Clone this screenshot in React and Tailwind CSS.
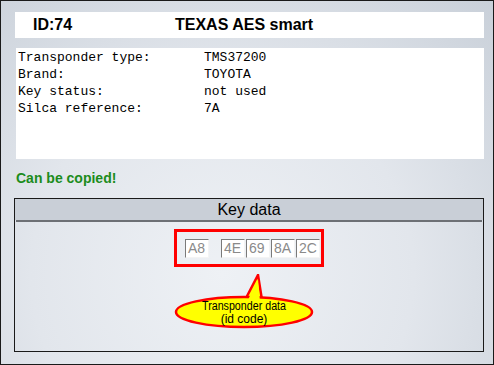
import React from 'react';

const rows = [
  ['Transponder type:', 'TMS37200'],
  ['Brand:', 'TOYOTA'],
  ['Key status:', 'not used'],
  ['Silca reference:', '7A'],
];

const KeyCell = ({ value }) => (
  <div className="w-[24px] h-[19px] bg-white border border-t-[#7a7a7a] border-l-[#7a7a7a] border-b-[#f4f4f4] border-r-[#f4f4f4] text-[14px] leading-[17px] text-[#8a8a8a] pl-[2px]">
    {value}
  </div>
);

const Balloon = () => (
  <svg className="absolute left-[158px] top-[75px]" width="142" height="56" viewBox="0 0 142 56">
    <polygon points="72,26 85,1 89,26" fill="#ffff00" stroke="#ff0000" strokeWidth="2.5" strokeLinejoin="miter" />
    <ellipse cx="71" cy="38" rx="68" ry="15" fill="#ffff00" stroke="#ff0000" strokeWidth="2.5" />
    <polygon points="74,28 85,5 87,28" fill="#ffff00" />
    <text x="71" y="36" textAnchor="middle" textLength="84" lengthAdjust="spacingAndGlyphs" fontSize="12" fontFamily="'Liberation Sans', sans-serif" fill="#000">
      Transponder data
    </text>
    <text x="71" y="49" textAnchor="middle" fontSize="12" fontFamily="'Liberation Sans', sans-serif" fill="#000">
      (id code)
    </text>
  </svg>
);

export default function App() {
  return (
    <div className="w-[494px] h-[365px] border border-[#1a1a1a] bg-[radial-gradient(ellipse_at_45%_75%,#eef1f5_0%,#e2e6ec_50%,#c9d0d9_100%)] pl-[13px] pr-[9px] pt-[11px] font-['Liberation_Sans',Arial,sans-serif]">
      {/* Header */}
      <div className="ml-px h-[26px] bg-white flex items-center">
        <span className="ml-[18px] w-[142px] text-[16px] font-bold text-black">ID:74</span>
        <span className="text-[16px] font-bold text-black">TEXAS AES smart</span>
      </div>

      {/* Info */}
      <div className="ml-[2px] mt-[10px] h-[111px] bg-white pt-[1px] pl-[2px] font-['Liberation_Mono','Courier_New',monospace] text-[13px] leading-[17px] text-black">
        {rows.map(([label, value]) => (
          <div key={label} className="flex">
            <span className="w-[186px] whitespace-pre">{label}</span>
            <span>{value}</span>
          </div>
        ))}
      </div>

      <div className="ml-[2px] mt-[10px] h-[19px] text-[14px] leading-[19px] font-bold text-[#1c8c1c]">
        Can be copied!
      </div>

      {/* Key data panel */}
      <div className="relative mt-[10px] h-[154px] border border-[#1a1a1a]">
        <div className="h-[21px] bg-[#c9cfd7] text-center text-[16px] leading-[21px] text-black">Key data</div>
        <div className="mx-px h-[2px] bg-[#6d7075]"></div>
        <div className="flex justify-center pt-[7px]">
          <div className="w-[150px] h-[38px] border-[3px] border-[#ff0000] flex items-center pl-[8px]">
            <KeyCell value="A8" />
            <div className="w-[12px]"></div>
            <div className="flex gap-px">
              <KeyCell value="4E" />
              <KeyCell value="69" />
              <KeyCell value="8A" />
              <KeyCell value="2C" />
            </div>
          </div>
        </div>
        <Balloon />
      </div>
    </div>
  );
}
